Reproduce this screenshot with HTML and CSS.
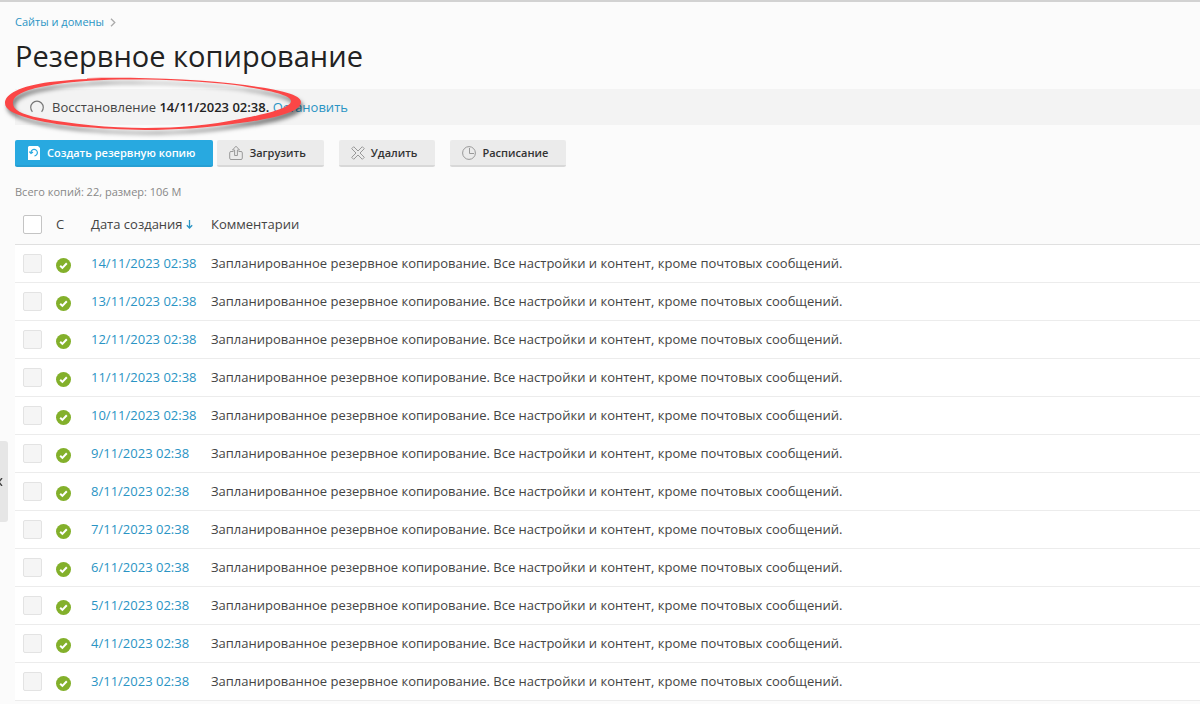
FILE: index.html
```html
<!DOCTYPE html>
<html lang="ru">
<head>
<meta charset="utf-8">
<title>Резервное копирование</title>
<link rel="stylesheet" href="styles.css">
</head>
<body>
<svg class="defs" aria-hidden="true">
  <symbol id="ok" viewBox="0 0 15 15"><circle cx="7.5" cy="7.5" r="7.5" fill="#83b02b"/><path d="M4.2 7.7l2.2 2.2 4.4-4.6" fill="none" stroke="#fff" stroke-width="2"/></symbol>
</svg>
<button class="side-toggle" type="button" aria-label="Свернуть панель"><svg width="3" height="8" viewBox="0 0 3 8"><path d="M2 0L-1 4l3 4" fill="none" stroke="#444" stroke-width="1.4"/></svg></button>
<main class="page">
  <nav class="crumbs"><a href="#">Сайты и домены</a><svg width="6" height="9" viewBox="0 0 6 9"><path d="M1 .7l3.800 3.800L1 8.300" fill="none" stroke="#aaa" stroke-width="1.300"/></svg></nav>
  <h1 class="title">Резервное копирование</h1>
  <div class="status">
    <svg class="spinner" width="16" height="16" viewBox="0 0 16 16"><path d="M3.400 12.800A6.300 6.300 0 1 1 12.600 12.800" fill="none" stroke="#777" stroke-width="1.200"/></svg>
    <p class="status-text">Восстановление <b>14/11/2023 02:38.</b> <a href="#">Остановить</a></p>
    <svg class="marker" width="312" height="66" viewBox="0 0 312 66" aria-hidden="true">
      <path fill-rule="evenodd" fill="#fb4646" d="M87 5C140 4 200 6 245 12C282 17 301 22 301 29C301 38 279 45 240 50C205 55 175 57 145 57C100 56 55 53 28 45C12 40 5 36 5 30C5 21 20 13 50 9C76 6 98 5 120 5.500L87 5.500ZM120 6.500C90 7 68 9 46 13C24 17 14 22 13 29C12 36 20 41 40 45C70 51 110 55 145 55C180 55 211 52 240 46C272 40 291 34 291 28C291 22 267 17 235 12C202 8 160 6 120 6.500Z"/>
    </svg>
  </div>
  <div class="toolbar">
    <button class="btn primary" type="button"><svg width="14" height="14" viewBox="0 0 14 14"><path d="M2 0h9l2 2v12H1V1z" fill="#fff"/><path d="M4 7A3.200 3.200 0 1 1 7.500 9.800M2.300 5.600L4 7.400l2-1.500" fill="none" stroke="#28a9e0" stroke-width="1.200"/></svg>Создать резервную копию</button>
    <button class="btn upload" type="button"><svg width="14" height="16" viewBox="0 0 14 16"><path d="M4.500 6.500H2a1.300 1.300 0 0 0-1.300 1.300v5.400A1.300 1.300 0 0 0 2 14.500h10a1.300 1.300 0 0 0 1.300-1.300V7.800A1.300 1.300 0 0 0 12 6.500H9.500M5.600 10.500V5H3.500L7 1.200 10.500 5H8.400v5.500z" fill="none" stroke="#999"/></svg>Загрузить</button>
    <button class="btn" type="button"><svg width="14" height="14" viewBox="0 0 14 14"><path d="M2.700.7L7 5 11.300.7l2 2L9 7l4.300 4.300-2 2L7 9l-4.300 4.300-2-2L5 7 .7 2.700z" fill="none" stroke="#999" stroke-linejoin="round"/></svg>Удалить</button>
    <button class="btn" type="button"><svg width="14" height="14" viewBox="0 0 14 14"><circle cx="7" cy="7" r="6.400" fill="none" stroke="#999"/><path d="M7.500 2v5.500H12" fill="none" stroke="#999"/></svg>Расписание</button>
  </div>
  <p class="summary">Всего копий: 22, размер: 106 М</p>
  <table class="list">
    <thead><tr><th class="c-check"><input type="checkbox" aria-label="Выбрать все"></th><th class="c-state">С</th><th class="c-date">Дата создания <svg width="7" height="9" viewBox="0 0 7 9"><path d="M3.500 0v8M.8 5.300l2.700 2.700 2.700-2.700" fill="none" stroke="#2a94c4" stroke-width="1.300"/></svg></th><th>Комментарии</th></tr></thead>
    <tbody id="rows"></tbody>
  </table>
</main>
<script src="rows.js"></script>
</body>
</html>
```

FILE: rows.js
```js
const body = document.getElementById('rows');
for (let day = 14; day >= 3; day--) {
  const date = day + '/11/2023 02:38';
  body.insertAdjacentHTML('beforeend',
    '<tr><td class="c-check"><input type="checkbox" disabled aria-label="' + date + '"></td>' +
    '<td class="c-state"><svg class="ok" width="15" height="15"><use href="#ok"/></svg></td>' +
    '<td class="c-date"><a href="#">' + date + '</a></td>' +
    '<td>Запланированное резервное копирование. Все настройки и контент, кроме почтовых сообщений.</td></tr>');
}
```

FILE: styles.css
```css
* { box-sizing: border-box; }
body {
  margin: 0;
  border-top: 2px solid #d2d2d2;
  background: #fbfbfb;
  color: #444;
  font: 13px/18px "Open Sans", "Noto Sans", sans-serif;
  overflow: hidden;
}
a { color: #2a94c4; text-decoration: none; }
.defs { position: absolute; width: 0; height: 0; }
.side-toggle {
  position: absolute;
  left: 0;
  top: 441px;
  width: 8px;
  height: 81px;
  padding: 0;
  border: 0;
  border-radius: 0 3px 3px 0;
  background: #e6e6e6;
}
.side-toggle svg { display: block; }
.page { padding: 12px 0 0 15px; }
.crumbs { display: flex; align-items: center; gap: 6px; font-size: 11px; line-height: 16px; }
.title { margin: 6px 0 0; font-size: 29px; line-height: 40px; font-weight: 400; color: #222; }
.status {
  position: relative;
  display: flex;
  align-items: center;
  gap: 7px;
  height: 36px;
  margin-top: 13px;
  padding-left: 14px;
  background: #f3f3f3;
}
.status-text { margin: 0; }
.status-text b { font-weight: 600; color: #222; }
.marker {
  position: absolute;
  left: -15px;
  top: -16px;
  overflow: visible;
  pointer-events: none;
  filter: drop-shadow(2px 4px 2px rgba(0, 0, 0, .5));
}
.toolbar { display: flex; margin-top: 15px; gap: 15px; }
.btn {
  display: flex;
  align-items: center;
  gap: 6px;
  height: 27px;
  padding: 0 18px 0 12px;
  border: 0;
  border-bottom: 2px solid #d8d8d8;
  border-radius: 2px;
  background: #ebebeb;
  color: #333;
  font: 600 11px/16px "Open Sans", "Noto Sans", sans-serif;
}
.btn.primary { border-color: #279fd3; background: #28a9e0; color: #fff; }
.btn.upload { margin-left: -11px; }
.summary { margin: 17px 0 0; font-size: 11px; line-height: 16px; color: #888; }
.list { width: 100%; margin-top: 5px; border-collapse: collapse; }
.list th, .list td { height: 38px; padding: 0; border-bottom: 1px solid #ececec; text-align: left; font-weight: 400; }
.list th { height: 39px; border-color: #e0e0e0; }
.list td { background: #fff; }
.list .c-check { width: 41px; padding-left: 8px; }
.list .c-state { width: 35px; }
.list .c-date { width: 120px; white-space: nowrap; }
.list input {
  display: block;
  appearance: none;
  width: 19px;
  height: 19px;
  margin: 0;
  border: 1px solid #c4c4c4;
  border-radius: 2px;
  background: #fff;
}
.list input:disabled { border-color: #e3e3e3; background: #f5f5f5; }
.ok { display: block; margin-top: 4px; }
```
